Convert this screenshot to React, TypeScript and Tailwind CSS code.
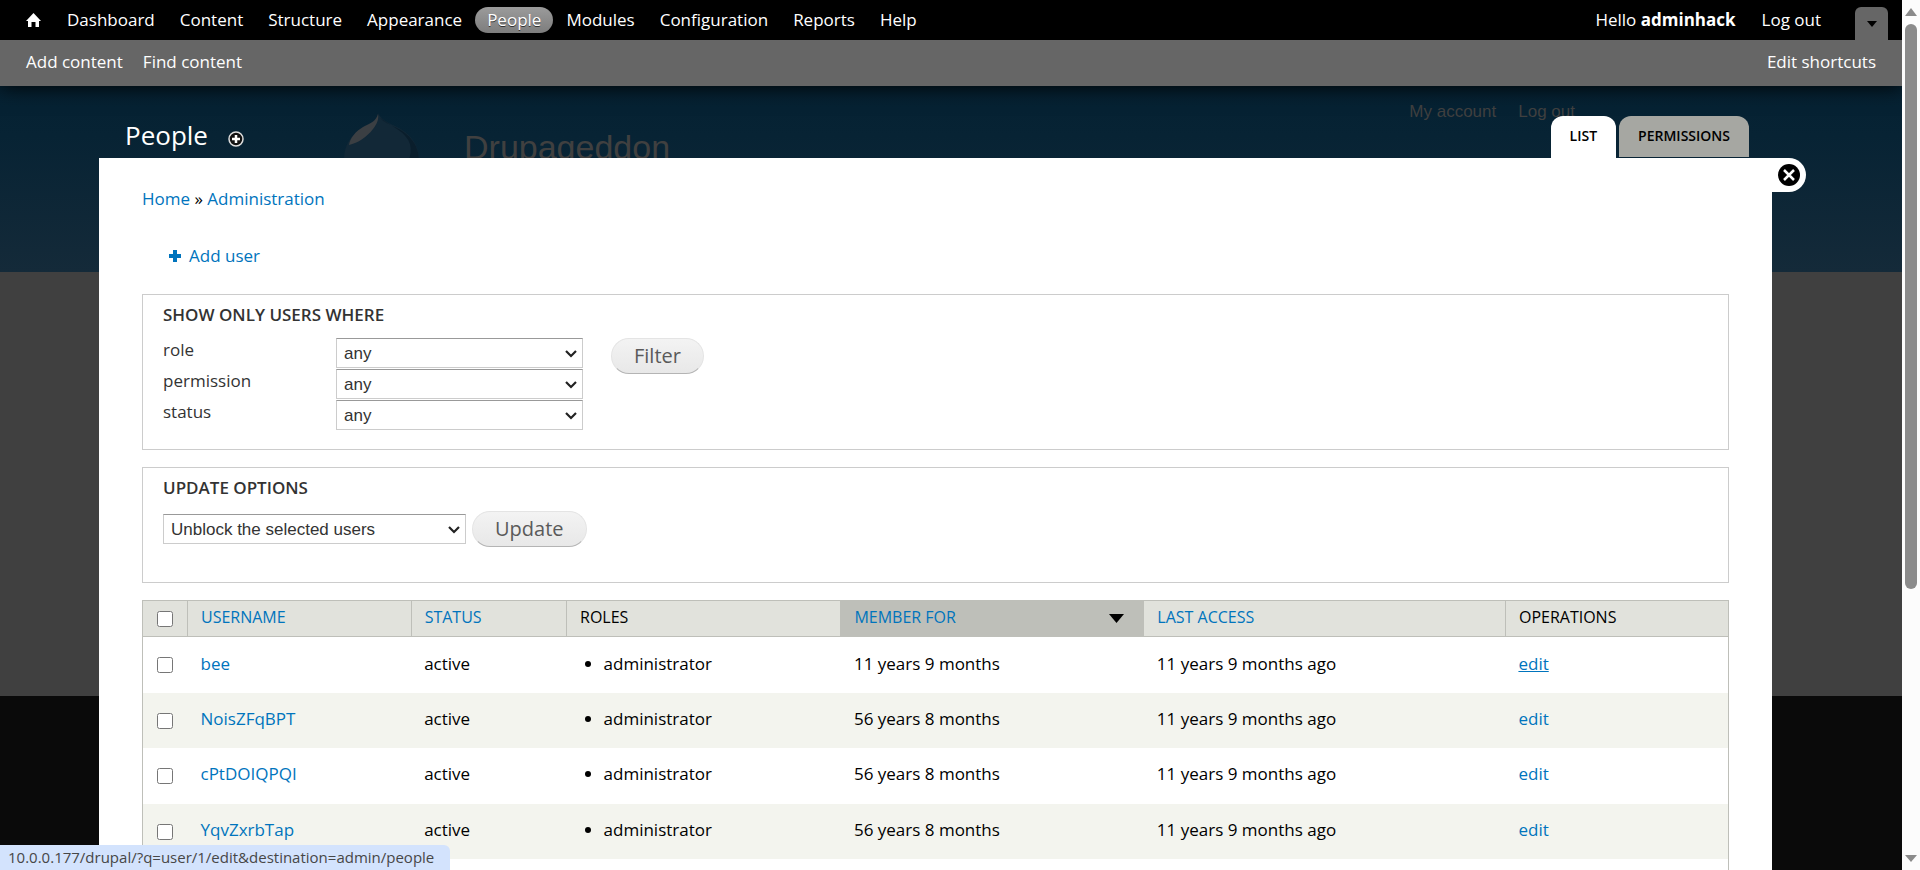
import React from 'react';
import clsx from 'clsx';

interface User {
  name: string;
  memberFor: string;
  lastAccess: string;
}

const MENU = ['Dashboard', 'Content', 'Structure', 'Appearance', 'People', 'Modules', 'Configuration', 'Reports', 'Help'];

const FILTERS = ['role', 'permission', 'status'];

const USERS: User[] = [
  { name: 'bee', memberFor: '11 years 9 months', lastAccess: '11 years 9 months ago' },
  { name: 'NoisZFqBPT', memberFor: '56 years 8 months', lastAccess: '11 years 9 months ago' },
  { name: 'cPtDOIQPQI', memberFor: '56 years 8 months', lastAccess: '11 years 9 months ago' },
  { name: 'YqvZxrbTap', memberFor: '56 years 8 months', lastAccess: '11 years 9 months ago' },
];

function Toolbar() {
  return (
    <header className="relative z-10 shadow-[0_0_20px_#000]">
      <div className="flex h-10 items-center bg-black pl-[26px] pr-[14px] text-[17px] text-white">
        <a href="#home" aria-label="Home" className="mr-[14px]">
          <svg width="15" height="14" viewBox="0 0 15 14" fill="#fff">
            <path d="M7.5 0 15 8h-2v6H9.500V9h-4v5H2V8H0z" />
          </svg>
        </a>
        <nav className="flex gap-px">
          {MENU.map(item => (
            <a
              key={item}
              href={`#${item.toLowerCase()}`}
              className={clsx(
                'rounded-full px-3 leading-[26px]',
                item === 'People' && 'bg-linear-to-b from-[#9b9b9b] to-[#7d7d7d] [text-shadow:0_1px_0_#333]'
              )}
            >
              {item}
            </a>
          ))}
        </nav>
        <div className="ml-auto flex items-center gap-[26px]">
          <a href="#user">Hello <strong>adminhack</strong></a>
          <a href="#logout">Log out</a>
          <button aria-label="Hide shortcuts" className="ml-2 mt-[7px] flex h-[33px] w-[33px] items-center justify-center rounded-t-md bg-[#666]">
            <svg width="10" height="6" viewBox="0 0 10 6"><path d="M0 0h10L5 6z" /></svg>
          </button>
        </div>
      </div>
      <div className="flex h-[46px] items-center gap-5 bg-[#666] pb-[2px] px-[26px] text-[17px] text-[#fefefe]">
        <a href="#add-content">Add content</a>
        <a href="#find-content">Find content</a>
        <a href="#edit-shortcuts" className="ml-auto">Edit shortcuts</a>
      </div>
    </header>
  );
}

// The dimmed front page that stays visible behind the overlay
function Backdrop() {
  return (
    <div aria-hidden="true" className="absolute inset-0 flex flex-col bg-[#0a0a0a] font-['Liberation_Sans',sans-serif] text-[#404040]">
      <div className="h-[272px] bg-linear-to-b from-[#021e2f] via-[#072334] to-[#142a39] pl-[344px] pr-[327px] pt-[102px]">
        <div className="flex items-start">
          <svg width="75" height="85" viewBox="0 0 75 85" className="mt-[11px]">
            <path d="M34 0c2 5 8 9 17 13 15 7 24 18 24 34 0 20-15 37-37 37S0 68 0 46c0-14 8-25 18-31 9-4 15-6 16-15z" fill="#122837" />
            <path d="M34 1c1 5-1 10-5 15-6 8-15 14-24 16 1-7 7-14 14-18 8-4 13-6 15-13z" fill="#3b3f43" />
            <path d="M36 5c4 4 9 6 15 9 15 7 24 18 24 34 0 10-4 20-11 26-6 3-14 0-10-10 9-10 15-22 12-33C62 19 49 14 36 5z" fill="#0a1e2c" />
          </svg>
          <span className="ml-[45px] mt-[25px] text-[34px] leading-10">Drupageddon</span>
          <span className="ml-auto flex gap-[22px] text-[17px] leading-5">
            <span>My account</span>
            <span>Log out</span>
          </span>
        </div>
      </div>
      <div className="h-[424px] bg-[#404040]" />
    </div>
  );
}

function Select({ id, label, value, className }: { id: string; label: string; value: string; className: string }) {
  return (
    <span className={clsx('relative block', className)}>
      <select
        id={id}
        aria-label={label}
        className="h-[30px] w-full appearance-none border border-[#ccc] border-t-[#999] bg-white px-[7px] pt-px font-['Liberation_Sans',sans-serif] text-[17px] leading-6 text-[#333]"
      >
        <option>{value}</option>
      </select>
      <svg width="12" height="8" viewBox="0 0 12 8" className="pointer-events-none absolute right-[6px] top-[12px]" fill="none" stroke="#222" strokeWidth="2.200">
        <path d="m1 1 5 5 5-5" />
      </svg>
    </span>
  );
}

function PillButton({ children }: { children: React.ReactNode }) {
  return (
    <button className="h-9 rounded-full border border-[#e4e4e4] border-b-[#b4b4b4] bg-linear-to-b from-[#f3f3f3] to-[#e8e8e8] px-[22px] text-[20px] leading-8 text-[#5a5a5a]">
      {children}
    </button>
  );
}

function UserTable() {
  const head = 'border-l border-[#bebfb9] px-[13px] pb-1 text-left font-normal uppercase';
  return (
    <table className="mt-[17px] w-full table-fixed border-collapse border border-[#bebfb9] text-[17px]">
      <colgroup>
        <col className="w-[45px]" />
        <col className="w-[14.1%]" />
        <col className="w-[9.8%]" />
        <col className="w-[17.3%]" />
        <col className="w-[19.1%]" />
        <col className="w-[22.8%]" />
        <col />
      </colgroup>
      <thead>
        <tr className="h-[36px] border-b border-[#bebfb9] bg-[#e1e2dc] text-[16px]">
          <th className="pl-[14px] text-left">
            <input type="checkbox" aria-label="Select all users" className="block h-4 w-4" />
          </th>
          <th className={head}><a href="#sort-name" className="text-[#0074bd]">Username</a></th>
          <th className={head}><a href="#sort-status" className="text-[#0074bd]">Status</a></th>
          <th className={head}>Roles</th>
          <th className={clsx(head, 'bg-[#bebfb9]')}>
            <a href="#sort-member" className="flex items-center justify-between pr-[6px] text-[#0074bd]">
              Member for
              <svg width="15" height="9" viewBox="0 0 15 9" className="mt-1"><path d="M0 0h15L7.500 9z" /></svg>
            </a>
          </th>
          <th className={head}><a href="#sort-access" className="text-[#0074bd]">Last access</a></th>
          <th className={head}>Operations</th>
        </tr>
      </thead>
      <tbody>
        {USERS.map((user, i) => (
          <tr key={user.name} className="h-[56px] even:h-[55px] even:bg-[#f3f4ee] [&>td]:pb-[3px] [&>td]:pl-[13px]">
            <td>
              <input type="checkbox" aria-label={`Select ${user.name}`} className="ml-px mt-1 block h-4 w-4" />
            </td>
            <td><a href="#user" className="text-[#0074bd]">{user.name}</a></td>
            <td>active</td>
            <td>
              <ul className="list-disc pl-6">
                <li>administrator</li>
              </ul>
            </td>
            <td>{user.memberFor}</td>
            <td>{user.lastAccess}</td>
            <td><a href="#edit" className={clsx('text-[#0074bd]', i === 0 && 'underline')}>edit</a></td>
          </tr>
        ))}
        <tr className="h-[56px]"><td colSpan={7} /></tr>
      </tbody>
    </table>
  );
}

function Overlay() {
  return (
    <main className="relative ml-[99px] mr-[130px]">
      <div className="flex h-[72px] items-end justify-between pl-[26px] pr-[23px]">
        <div className="flex items-center gap-5 pb-[5px]">
          <h1 className="text-[26px] font-medium leading-9 text-white">People</h1>
          <button aria-label="Add to shortcuts" className="mt-2">
            <svg width="16" height="16" viewBox="0 0 16 16">
              <circle cx="8" cy="8" r="7" fill="#111" stroke="#ddd" strokeWidth="1.500" />
              <path d="M8 4v8M4 8h8" stroke="#fff" strokeWidth="2.500" />
            </svg>
          </button>
        </div>
        <nav className="flex gap-[3px] text-[14px] font-semibold leading-10 text-black">
          <a href="#list" className="rounded-t-xl bg-white px-[19px] pb-[2px]">LIST</a>
          <a href="#permissions" className="mb-px rounded-t-xl bg-[#a6a7a2] px-[19px] pb-px">PERMISSIONS</a>
        </nav>
      </div>
      <button aria-label="Close overlay" className="absolute left-full top-[72px] flex h-[34px] w-[34px] items-center rounded-r-full bg-white pl-[6px]">
        <svg width="22" height="22" viewBox="0 0 22 22">
          <circle cx="11" cy="11" r="11" />
          <path d="m6 6 10 10M16 6 6 16" stroke="#fff" strokeWidth="2.500" />
        </svg>
      </button>
      <div className="bg-white px-[43px] pt-7 text-[17px]">
        <div className="leading-[26px]">
          <a href="#home" className="text-[#0074bd]">Home</a> » <a href="#admin" className="text-[#0074bd]">Administration</a>
        </div>
        <a href="#add-user" className="ml-[27px] mt-[31px] flex w-fit items-center gap-2 leading-[26px] text-[#0074bd]">
          <svg width="12" height="12" viewBox="0 0 12 12" stroke="#0074bd" strokeWidth="4"><path d="M6 0v12M0 6h12" /></svg>
          Add user
        </a>
        <section className="mt-[25px] h-[156px] border border-[#ccc] px-5 pt-[7px] text-[#333]">
          <h2 className="font-semibold leading-[26px]">SHOW ONLY USERS WHERE</h2>
          <div className="mt-[10px] flex items-start">
            <div className="flex flex-col gap-px">
              {FILTERS.map(name => (
                <div key={name} className="flex h-[30px]">
                  <label htmlFor={name} className="w-[173px] leading-6">{name}</label>
                  <Select id={name} label={name} value="any" className="w-[247px]" />
                </div>
              ))}
            </div>
            <div className="ml-7"><PillButton>Filter</PillButton></div>
          </div>
        </section>
        <section className="mt-[17px] h-[116px] border border-[#ccc] px-5 pt-[7px] text-[#333]">
          <h2 className="font-semibold leading-[26px]">UPDATE OPTIONS</h2>
          <div className="mt-[10px] flex items-center gap-[6px]">
            <Select id="operation" label="Operation" value="Unblock the selected users" className="w-[303px]" />
            <PillButton>Update</PillButton>
          </div>
        </section>
        <UserTable />
      </div>
    </main>
  );
}

function Scrollbar() {
  return (
    <div aria-hidden="true" className="flex w-[18px] shrink-0 flex-col items-center bg-[#fcfcfc] py-2">
      <svg width="12" height="8" viewBox="0 0 12 8" fill="#8b8b8b"><path d="M6 0 12 8H0z" /></svg>
      <div className="mt-2 h-[565px] w-3 rounded-full bg-[#8b8b8b]" />
      <svg width="12" height="7" viewBox="0 0 12 7" fill="#8b8b8b" className="mt-auto"><path d="M0 0h12L6 7z" /></svg>
    </div>
  );
}

export default function App() {
  return (
    <div className="flex h-screen overflow-hidden font-['Open_Sans','Noto_Sans',sans-serif] text-black">
      <div className="relative min-w-0 flex-1 overflow-hidden">
        <Backdrop />
        <Toolbar />
        <Overlay />
      </div>
      <Scrollbar />
      <div className="fixed bottom-0 left-0 z-20 rounded-tr-md bg-[#d3e3fd] pl-2 pr-4 text-[15px] leading-[25px] text-[#474747]">
        10.0.0.177/drupal/?q=user/1/edit&amp;destination=admin/people
      </div>
    </div>
  );
}
